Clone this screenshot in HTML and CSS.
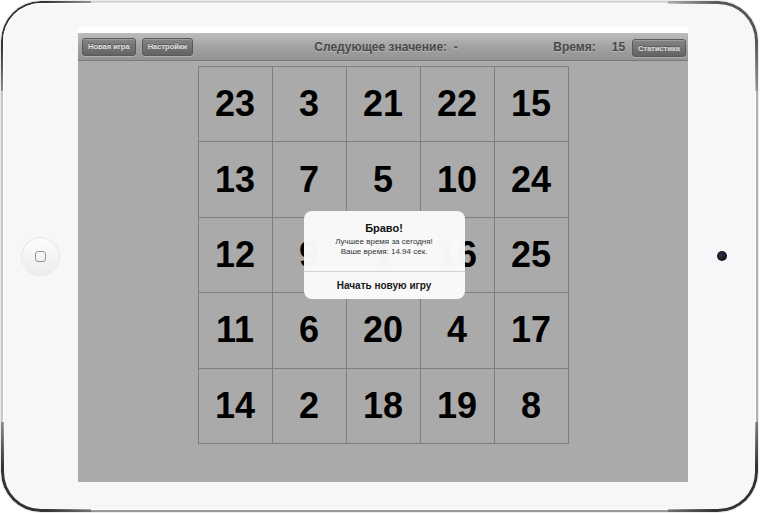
FILE: index.html
```html
<!DOCTYPE html>
<html>
<head>
    <meta charset="UTF-8">
    <meta name="viewport" content="width=device-width, initial-scale=1.0">
    <title>Таблица Шульте</title>
    <link rel="stylesheet" href="styles.css">
</head>
<body>
    <div class="ipad">
        <div class="bezel">
            <div class="side side-left">
                <div class="home-button"><span class="home-icon"></span></div>
            </div>

            <div class="screen">
                <div class="status-strip"></div>
                <div class="toolbar">
                    <div class="toolbar-left">
                        <button class="bar-button">Новая игра</button>
                        <button class="bar-button">Настройки</button>
                    </div>
                    <div class="toolbar-title">Следующее значение: &nbsp;-</div>
                    <div class="toolbar-right">
                        <span class="time-label">Время:</span>
                        <span class="time-value">15</span>
                        <button class="bar-button">Статистика</button>
                    </div>
                </div>

                <div class="game-area">
                    <div class="board">
                        <div class="cell">23</div>
                        <div class="cell">3</div>
                        <div class="cell">21</div>
                        <div class="cell">22</div>
                        <div class="cell">15</div>
                        <div class="cell">13</div>
                        <div class="cell">7</div>
                        <div class="cell">5</div>
                        <div class="cell">10</div>
                        <div class="cell">24</div>
                        <div class="cell">12</div>
                        <div class="cell">9</div>
                        <div class="cell">1</div>
                        <div class="cell">16</div>
                        <div class="cell">25</div>
                        <div class="cell">11</div>
                        <div class="cell">6</div>
                        <div class="cell">20</div>
                        <div class="cell">4</div>
                        <div class="cell">17</div>
                        <div class="cell">14</div>
                        <div class="cell">2</div>
                        <div class="cell">18</div>
                        <div class="cell">19</div>
                        <div class="cell">8</div>

                        <div class="alert">
                            <div class="alert-body">
                                <div class="alert-title">Браво!</div>
                                <div class="alert-text">Лучшее время за сегодня!<br>Ваше время: 14.94 сек.</div>
                            </div>
                            <div class="alert-action">Начать новую игру</div>
                        </div>
                    </div>
                </div>
            </div>

            <div class="side side-right">
                <div class="camera"></div>
            </div>
        </div>
    </div>
</body>
</html>
```

FILE: styles.css
```css
html, body { margin: 0; padding: 0; }
body {
    background: #fff;
    font-family: "Liberation Sans", Arial, sans-serif;
    width: 760px;
    height: 513px;
    overflow: hidden;
}

/* device shell: thin chrome rim around a white bezel */
.ipad {
    position: relative;
    margin: 1px 0 0 1px;
    width: 757px;
    height: 511px;
    box-sizing: border-box;
    border: 2px solid #c6c6c6;
    border-top-color: #d6d6d6;
    border-bottom-color: #9a9a9a;
    border-right-color: #b0b0b0;
    border-radius: 40px;
    box-shadow: 0 0 0 1px rgba(0,0,0,0.08);
    background: #f7f7f9;
}

/* darker chrome where the rim bends round the corners */
.ipad::before, .ipad::after, .bezel::before, .bezel::after {
    content: "";
    position: absolute;
    width: 90px;
    height: 90px;
    box-sizing: border-box;
    border: 0 solid #333;
}
.ipad::before {
    left: -2px; top: -2px;
    border-top-width: 3px; border-left-width: 3px;
    border-top-left-radius: 40px;
    -webkit-mask-image: radial-gradient(circle at 0 0, #000 35%, transparent 95%);
    mask-image: radial-gradient(circle at 0 0, #000 35%, transparent 95%);
}
.ipad::after {
    right: -2px; bottom: -2px;
    border-bottom-width: 3px; border-right-width: 3px;
    border-bottom-right-radius: 40px;
    -webkit-mask-image: radial-gradient(circle at 100% 100%, #000 35%, transparent 95%);
    mask-image: radial-gradient(circle at 100% 100%, #000 35%, transparent 95%);
}
.bezel::before {
    left: -2px; bottom: -2px;
    border-bottom-width: 3px; border-left-width: 3px;
    border-bottom-left-radius: 40px;
    -webkit-mask-image: radial-gradient(circle at 0 100%, #000 35%, transparent 95%);
    mask-image: radial-gradient(circle at 0 100%, #000 35%, transparent 95%);
}
.bezel::after {
    right: -2px; top: -2px;
    border-color: #555;
    border-top-width: 3px; border-right-width: 3px;
    border-top-right-radius: 40px;
    -webkit-mask-image: radial-gradient(circle at 100% 0, #000 30%, transparent 90%);
    mask-image: radial-gradient(circle at 100% 0, #000 30%, transparent 90%);
}

.bezel {
    position: relative;
    height: 100%;
    box-sizing: border-box;
    border-radius: 38px;
    background: #f7f7f9;
    box-shadow: inset 0 0 0 1px #fff;
    display: flex;
    padding: 24px 0 28px;
}
.side {
    display: flex;
    align-items: center;
    justify-content: center;
    padding-top: 3px;
}
.side-left { width: 75px; }
.side-right { flex: 1; }

.home-button {
    width: 37px;
    height: 37px;
    border-radius: 50%;
    background: linear-gradient(to bottom, #fdfdfd, #ececee);
    box-shadow: 0 0 0 1px #e8e8ea, inset 0 1px 1px rgba(0,0,0,0.04);
    display: flex;
    align-items: center;
    justify-content: center;
}
.home-icon {
    width: 9px;
    height: 9px;
    border: 1.5px solid #959597;
    border-radius: 3px;
}
.camera {
    width: 10px;
    height: 10px;
    border-radius: 50%;
    background: radial-gradient(circle at 40% 40%, #2b3550, #111 70%);
    margin-left: -1px;
}

/* screen */
.screen {
    width: 610px;
    display: flex;
    flex-direction: column;
    background: #aaaaaa;
}
.status-strip { height: 6px; background: #fff; }

.toolbar {
    height: 28px;
    box-sizing: border-box;
    display: grid;
    grid-template-columns: 1fr auto 1fr;
    align-items: center;
    padding: 0 2px 0 4px;
    background: linear-gradient(to bottom, #bdbdbd 0%, #a3a3a3 50%, #929292 100%);
    border-bottom: 1px solid #7a7a7a;
}
.toolbar-left { display: flex; gap: 6px; }
.toolbar-right {
    display: flex;
    justify-content: flex-end;
    align-items: center;
}
.toolbar-title, .time-label, .time-value {
    font-weight: bold;
    font-size: 12px;
    color: #4a4a4a;
    text-shadow: 0 1px 0 rgba(255,255,255,0.25);
}
.toolbar-title { padding-left: 4px; }
.time-value { margin: 0 7px 0 16px; }

.bar-button {
    height: 18px;
    padding: 0 5px;
    border: 1px solid #5a5a5a;
    border-radius: 3px;
    background: linear-gradient(to bottom, #858585, #636363);
    box-shadow: inset 0 1px 0 rgba(255,255,255,0.2), 0 1px 0 rgba(255,255,255,0.25);
    color: #e0e0e0;
    font-family: "Liberation Sans", Arial, sans-serif;
    font-weight: bold;
    font-size: 7.5px;
    text-shadow: 0 -1px 0 rgba(0,0,0,0.35);
}
.toolbar-right .bar-button { margin-top: 3px; }

/* board */
.game-area {
    flex: 1;
    display: flex;
    justify-content: center;
    padding-top: 5px;
}
.board {
    position: relative;
    align-self: flex-start;
    display: grid;
    grid-template-columns: repeat(5, 74px);
    grid-template-rows: repeat(5, 75.4px);
    border-left: 1px solid #7e7e7e;
    border-top: 1px solid #7e7e7e;
}
.cell {
    border-right: 1px solid #7e7e7e;
    border-bottom: 1px solid #7e7e7e;
    display: flex;
    align-items: center;
    justify-content: center;
    font-weight: bold;
    font-size: 36px;
    color: #000;
}

/* result dialog */
.alert {
    position: absolute;
    left: 105px;
    top: 144px;
    width: 161px;
    height: 88px;
    border-radius: 8px;
    background: rgba(250,250,250,0.98);
    display: flex;
    flex-direction: column;
}
.alert-body {
    flex: 1;
    text-align: center;
    padding-top: 11px;
    border-bottom: 1px solid #d2d2d2;
}
.alert-title {
    font-weight: bold;
    font-size: 11px;
    color: #111;
    margin-bottom: 3px;
}
.alert-text {
    font-size: 8px;
    line-height: 10px;
    color: #333;
}
.alert-action {
    height: 27px;
    display: flex;
    align-items: center;
    justify-content: center;
    font-weight: bold;
    font-size: 10px;
    color: #1a1a1a;
}
```
